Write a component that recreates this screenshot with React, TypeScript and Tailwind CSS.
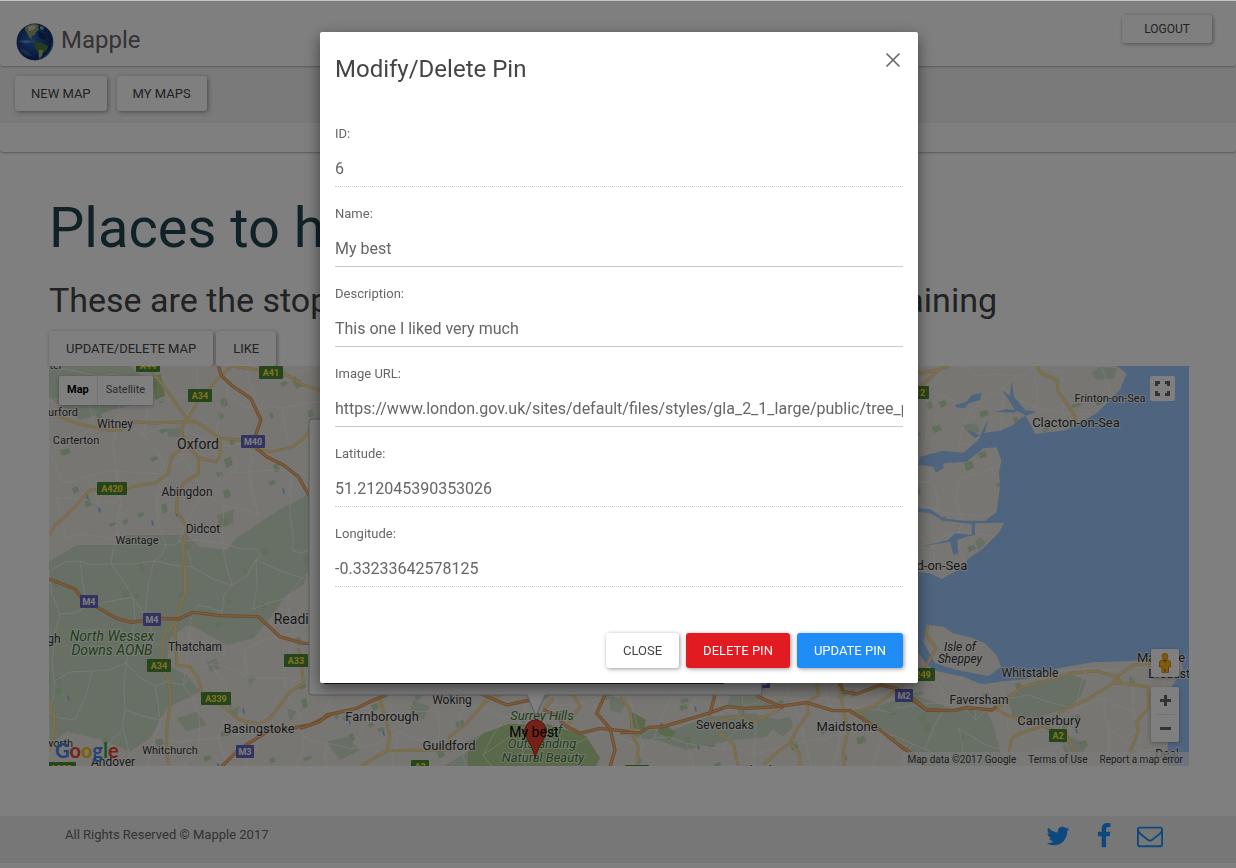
import React from "react";

const FONT = "font-['Roboto','Noto_Sans',sans-serif]";

/* ---------- Map data ---------- */

type Label = { x: number; y: number; text: string; size?: number; tone?: "park" | "isle" };

const LABELS: Label[] = [
  { x: 56, y: 369, text: "ter", size: 11 },
  { x: 63, y: 416, text: "urford", size: 11 },
  { x: 115, y: 428, text: "Witney", size: 12 },
  { x: 76, y: 444, text: "Carterton", size: 11 },
  { x: 198, y: 449, text: "Oxford", size: 14 },
  { x: 187, y: 496, text: "Abingdon", size: 12 },
  { x: 203, y: 533, text: "Didcot", size: 12 },
  { x: 137, y: 544, text: "Wantage", size: 11 },
  { x: 299, y: 624, text: "Reading", size: 14 },
  { x: 112, y: 641, text: "North Wessex", size: 14, tone: "park" },
  { x: 112, y: 655, text: "Downs AONB", size: 14, tone: "park" },
  { x: 54, y: 643, text: "gh", size: 12 },
  { x: 195, y: 651, text: "Thatcham", size: 12 },
  { x: 259, y: 733, text: "Basingstoke", size: 13 },
  { x: 170, y: 754, text: "Whitchurch", size: 11 },
  { x: 113, y: 766, text: "Andover", size: 12 },
  { x: 59, y: 747, text: "worth", size: 11 },
  { x: 452, y: 704, text: "Woking", size: 12 },
  { x: 382, y: 721, text: "Farnborough", size: 13 },
  { x: 449, y: 750, text: "Guildford", size: 13 },
  { x: 542, y: 720, text: "Surrey Hills", size: 13, tone: "park" },
  { x: 542, y: 734, text: "Area of", size: 13, tone: "park" },
  { x: 542, y: 748, text: "Outstanding", size: 13, tone: "park" },
  { x: 543, y: 762, text: "Natural Beauty", size: 13, tone: "park" },
  { x: 725, y: 729, text: "Sevenoaks", size: 12 },
  { x: 847, y: 731, text: "Maidstone", size: 13 },
  { x: 757, y: 775, text: "Tunbridge", size: 13 },
  { x: 1110, y: 402, text: "Frinton-on-Sea", size: 11 },
  { x: 1076, y: 427, text: "Clacton-on-Sea", size: 13 },
  { x: 918, y: 570, text: "Southend-on-Sea", size: 13 },
  { x: 960, y: 651, text: "Isle of", size: 12, tone: "isle" },
  { x: 960, y: 663, text: "Sheppey", size: 12, tone: "isle" },
  { x: 1030, y: 677, text: "Whitstable", size: 12 },
  { x: 979, y: 704, text: "Faversham", size: 12 },
  { x: 1049, y: 725, text: "Canterbury", size: 13 },
  { x: 1161, y: 662, text: "Margate", size: 13 },
  { x: 1179, y: 678, text: "Broadstairs", size: 12 },
  { x: 1167, y: 758, text: "Deal", size: 12 },
];

const BADGES: { x: number; y: number; text: string; motorway?: boolean }[] = [
  { x: 148, y: 365, text: "A44" },
  { x: 271, y: 372, text: "A41" },
  { x: 200, y: 395, text: "A34" },
  { x: 112, y: 488, text: "A420" },
  { x: 253, y: 441, text: "M40", motorway: true },
  { x: 89, y: 601, text: "M4", motorway: true },
  { x: 152, y: 619, text: "M4", motorway: true },
  { x: 159, y: 665, text: "A34" },
  { x: 216, y: 698, text: "A339" },
  { x: 296, y: 660, text: "A33" },
  { x: 245, y: 751, text: "M3", motorway: true },
  { x: 61, y: 768, text: "A303" },
  { x: 420, y: 766, text: "A3" },
  { x: 637, y: 771, text: "A22" },
  { x: 758, y: 681, text: "M25", motorway: true },
  { x: 917, y: 392, text: "A12" },
  { x: 920, y: 674, text: "A249" },
  { x: 904, y: 695, text: "M2", motorway: true },
  { x: 1058, y: 735, text: "A2" },
];

/* Each tile holds shapes drawn at three units per map pixel from its own origin. */
type Tile = {
  origin: [number, number];
  parks?: string[];
  sea?: string[];
  islands?: string[];
  roads?: string[];
  motorways?: string[];
};

const TILES: Tile[] = [
  {
    origin: [40, 360],
    parks: [
      "M27 605L110 555 230 555 260 525 440 525 480 560 560 570 590 535 640 500 700 460 810 400 810 640 27 640Z",
      "M27 18L270 18 300 45 340 50 340 120 220 150 120 180 27 110Z",
      "M530 465L580 450 580 490 545 500Z",
      "M380 205L425 200 420 230 385 230Z",
    ],
    roads: [
      "M27 525L45 495 75 470 110 435 150 390 255 388 300 375 345 370 385 340 395 290 425 265",
      "M27 155L60 170 110 190 200 210 240 210 280 185 340 190 420 185 470 185 540 235 600 240 650 270 700 275 760 260 790 235 810 210",
      "M335 35L380 90 440 175 425 205 430 240 475 295 475 340 430 370 410 420 410 455 440 500 430 560 432 640",
      "M440 185L470 130 530 60 575 18",
      "M575 18L690 35 740 45 790 75 840 90",
      "M475 295L530 305 540 285 540 235",
    ],
    motorways: ["M535 18L545 48 580 80 632 115 663 180 645 230 650 265 680 290 730 315 775 350 808 408"],
  },
  {
    origin: [40, 565],
    parks: [
      "M27 0L810 0 790 60 740 90 690 160 640 220 560 240 470 190 440 180 390 220 380 300 440 330 480 380 380 430 330 520 270 560 190 525 80 500 27 540Z",
      "M500 290L530 280 540 310 510 320Z M620 330L650 340 630 360Z M740 430L770 440 750 470Z",
      "M410 460L470 440 500 480 440 500Z M560 440L600 420 590 460Z",
    ],
    roads: [
      "M435 0L435 80 410 165 370 215 365 300 385 350 392 400 380 500 380 560 385 600",
      "M405 180L410 300 450 305 475 340 485 385 550 425 600 465 650 475",
      "M650 480L690 460 720 420 750 380 790 355 785 300 775 250",
      "M27 410L42 450 40 510 27 560",
    ],
    motorways: [
      "M27 42L105 72 125 100 230 160 275 172 360 160 415 162 460 142 540 152 655 155 720 215 790 235 812 235",
      "M545 605L600 550 650 520 690 495 750 490 810 480 870 450",
    ],
  },
  {
    origin: [300, 670],
    parks: [
      "M430 290L510 240 500 215 560 185 640 175 720 200 800 215 870 240 890 290Z",
      "M80 215L140 200 180 240 120 270Z M340 90L390 110 370 150 330 130Z",
      "M930 75L980 95 960 130 930 120Z",
    ],
    roads: [
      "M235 75L255 140 270 200 260 242 180 290",
      "M260 242L440 240 450 200 500 160 560 90 600 75",
      "M730 120L760 85M820 75L840 110 800 170",
    ],
    motorways: [
      "M0 175L60 155 80 135 170 115 210 95 260 75",
      "M540 70L620 105 690 90",
      "M730 120L765 135 800 170 840 190 900 175 990 185",
      "M915 75L890 130 930 175 945 240 930 290",
    ],
  },
  {
    origin: [620, 670],
    parks: [
      "M30 200L80 180 160 180 265 140 400 130 480 150 440 200 340 210 200 240 110 210Z",
      "M330 75L430 75 460 110 320 110Z M700 130L880 75 960 130 960 230 850 225 780 170Z",
      "M470 150L510 140 520 170 490 200 460 180Z",
    ],
    roads: [
      "M265 130L300 190 340 220 355 290",
      "M0 80L30 120 40 200 55 230 50 290",
      "M300 150L350 140 400 155 480 120",
      "M590 40L595 75 560 98 565 130 530 180 510 220 540 250 540 290",
      "M510 220L480 240 430 285",
      "M655 40L670 120 685 180 670 240 672 290",
      "M690 130L760 110 850 45",
    ],
    motorways: [
      "M0 188L60 188 85 172 130 170 265 130 320 110 380 115 470 110 560 98 640 122 690 122 780 180 850 235 890 262",
      "M270 130L285 75",
      "M410 78L460 100 490 115",
      "M660 40L670 65 710 72 780 45 830 55 870 85 920 120 965 122",
    ],
  },
  {
    origin: [900, 360],
    parks: ["M575 40L600 20 650 25 645 55 590 60Z", "M185 195L230 190 240 215 210 225Z", "M225 545L240 532 258 550 235 570Z"],
    sea: [
      "M650 18L680 40 660 90 630 120 590 160 500 210 405 222 398 205 375 165 345 150 320 110 305 90 330 108 335 60 342 110 375 150 410 155 385 165 365 172 340 195 300 212 245 220 235 240 190 278 130 272 60 290 55 315 100 320 108 338 130 325 130 310 200 305 250 265 290 262 304 300 297 340 300 380 290 455 255 482 190 482 130 475 90 447 40 445 40 455 90 460 130 482 215 492 215 525 165 520 145 540 60 560 150 545 160 585 175 580 172 540 200 530 225 525 225 490 313 488 295 520 250 565 200 600 200 640 867 640 867 18Z",
      "M165 135L200 125 215 105 245 98 240 120 205 130 195 145 168 142Z",
      "M285 155L320 148 360 150 340 158Z M200 210L240 225 265 178 255 215 225 235Z",
    ],
    roads: [
      "M55 40L100 32 150 18M60 80L100 45 130 18",
      "M410 18L425 40 470 60 475 95 500 130 520 160 530 185",
    ],
  },
  {
    origin: [900, 565],
    parks: [
      "M20 380L150 430 260 440 280 480 310 600 20 600Z",
      "M400 350L520 330 560 345 540 400 500 430 410 460 340 460 320 390Z",
      "M480 500L560 540 540 600 500 600Z",
    ],
    sea: [
      "M40 20L90 25 125 42 200 0 867 0 867 605 803 605 803 520 830 440 835 400 812 370 850 310 840 280 760 275 700 288 580 292 480 308 380 342 300 350 245 358 190 335 110 318 80 300 40 240Z",
    ],
    islands: ["M80 180L130 185 160 205 215 218 255 235 290 270 303 305 265 333 170 315 105 295 70 230Z"],
    roads: [
      "M85 180L78 210 108 248 85 290 60 330",
      "M285 435L365 365 420 355 510 325 590 318 650 335 700 300 800 290",
      "M430 480L500 430 560 405 640 355 650 335 665 355 745 365 745 430 710 470 715 500 690 560 690 600",
      "M285 430L320 450 420 480 500 510 540 600",
      "M320 600L335 520 360 505 425 485",
      "M640 355L665 355",
    ],
    motorways: ["M20 385L80 435 160 437 200 428 275 435 290 425", "M0 540L40 570 80 600"],
  },
];

/* Country lanes and woods are laid out on a jittered grid with a fixed seed. */
function buildCountryside() {
  let seed = 41;
  const rand = () => {
    seed = (seed * 16807) % 2147483647;
    return seed / 2147483647;
  };
  const step = 34;
  const cols = 36;
  const rows = 14;
  const points: [number, number][][] = [];
  for (let r = 0; r < rows; r++) {
    const row: [number, number][] = [];
    for (let c = 0; c < cols; c++) {
      row.push([Math.round(40 + c * step + rand() * 26), Math.round(355 + r * step + rand() * 26)]);
    }
    points.push(row);
  }
  let lanes = "";
  const link = (a: [number, number], b: [number, number]) => {
    const mx = Math.round((a[0] + b[0]) / 2 + rand() * 8 - 4);
    const my = Math.round((a[1] + b[1]) / 2 + rand() * 8 - 4);
    lanes += `M${a[0]} ${a[1]}L${mx} ${my} ${b[0]} ${b[1]}`;
  };
  for (let r = 0; r < rows; r++) {
    for (let c = 0; c < cols; c++) {
      if (c + 1 < cols && rand() > 0.25) link(points[r][c], points[r][c + 1]);
      if (r + 1 < rows && rand() > 0.25) link(points[r][c], points[r + 1][c]);
    }
  }
  let woods = "";
  let ponds = "";
  for (let i = 0; i < 260; i++) {
    const x = Math.round(49 + rand() * 1130);
    const y = Math.round(366 + rand() * 400);
    const w = Math.round(3 + rand() * 6);
    const h = Math.round(2 + rand() * 6);
    woods += `M${x} ${y}l${w} -2 2 ${h} -${w} 3z`;
    if (i % 9 === 0) ponds += `M${x + 14} ${y + 6}l2 1 1 5 -2 -1z`;
  }
  return { lanes, woods, ponds };
}

const COUNTRYSIDE = buildCountryside();

function TileLayer({ pick, render }: { pick: (t: Tile) => string[] | undefined; render: (d: string) => React.ReactNode }) {
  return (
    <>
      {TILES.map((tile, i) => (
        <g key={i} transform={`translate(${tile.origin[0]} ${tile.origin[1]}) scale(0.33333)`}>
          {(pick(tile) || []).map((d, j) => (
            <React.Fragment key={j}>{render(d)}</React.Fragment>
          ))}
        </g>
      ))}
    </>
  );
}

function MapDrawing() {
  const tone = { park: "#3f7d2c", isle: "#333333" };
  return (
    <svg
      viewBox="49 366 1140 400"
      preserveAspectRatio="xMidYMid slice"
      className="block h-[400px] w-full"
      role="img"
      aria-label="Map of south-east England"
    >
      <rect x="49" y="366" width="1140" height="400" fill="#f0ece5" />
      <TileLayer pick={(t) => t.parks} render={(d) => <path d={d} fill="#d0e0cb" />} />
      <path d={COUNTRYSIDE.woods} fill="#c3dcb9" />
      <path
        d="M153 376l8 -2 4 22 -10 4zM468 752l14 -18 26 -10 40 0 38 12 14 22 -4 8 -128 0zM632 712l14 8 -2 10 -14 -2zM660 722l16 10 -6 8 -12 -8z"
        fill="#b3d394"
      />
      <path d={COUNTRYSIDE.ponds} fill="#8fbcf5" />
      <path d={COUNTRYSIDE.lanes} fill="none" stroke="#ffffff" strokeOpacity="0.6" strokeWidth="1" />
      <TileLayer pick={(t) => t.sea} render={(d) => <path d={d} fill="#9fc9ff" />} />
      <TileLayer pick={(t) => t.islands} render={(d) => <path d={d} fill="#f0ece5" />} />
      <TileLayer
        pick={(t) => t.roads}
        render={(d) => (
          <>
            <path d={d} fill="none" stroke="#e3cd92" strokeWidth="9" strokeLinejoin="round" />
            <path d={d} fill="none" stroke="#fbe0a0" strokeWidth="6" strokeLinejoin="round" />
          </>
        )}
      />
      <TileLayer
        pick={(t) => t.motorways}
        render={(d) => (
          <>
            <path d={d} fill="none" stroke="#d99556" strokeWidth="10" strokeLinejoin="round" />
            <path d={d} fill="none" stroke="#f6b77c" strokeWidth="5" strokeLinejoin="round" />
          </>
        )}
      />
      {LABELS.map((l) => (
        <text
          key={`${l.text}-${l.x}`}
          x={l.x}
          y={l.y}
          textAnchor="middle"
          fontSize={l.size}
          fontStyle={l.tone ? "italic" : "normal"}
          fill={l.tone ? tone[l.tone] : "#333333"}
          stroke="#ffffff"
          strokeOpacity="0.7"
          strokeWidth="2"
          strokeLinejoin="round"
          paintOrder="stroke"
        >
          {l.text}
        </text>
      ))}
      {BADGES.map((b) => {
        const w = b.text.length * 6 + 6;
        return (
          <g key={`${b.text}-${b.x}`}>
            <rect x={b.x - w / 2} y={b.y - 6} width={w} height="13" rx="1" fill={b.motorway ? "#6667c4" : "#4f8a35"} />
            <text
              x={b.x}
              y={b.y + 4}
              textAnchor="middle"
              fontSize="9"
              fontWeight="700"
              fill={b.motorway ? "#ffffff" : "#ffe94a"}
            >
              {b.text}
            </text>
          </g>
        );
      })}
      {/* Info window */}
      <path
        d="M312 419H759a3 3 0 0 1 3 3V692a3 3 0 0 1 -3 3H545L536 716 527 695H312a3 3 0 0 1 -3 -3V422a3 3 0 0 1 3 -3Z"
        fill="#ffffff"
        stroke="#b5b5b5"
        strokeWidth="1"
      />
      <rect x="324" y="484" width="400" height="200" fill="#34401f" />
      {/* Pin */}
      <path
        d="M535 759C534 746 525 740 525 730.500a10.500 10.500 0 0 1 21 0C546 740 537 746 535 759Z"
        fill="#ea4335"
        stroke="#a52714"
        strokeWidth="1"
      />
      <text x="534" y="737" textAnchor="middle" fontSize="14" fill="#000000">
        My best
      </text>
    </svg>
  );
}

function GoogleMark() {
  return (
    <a
      href="#google"
      aria-label="Google"
      className="absolute bottom-0.5 left-1.5 font-['Lato',sans-serif] text-xl leading-7 font-bold"
    >
      <span className="text-[#4285f4]">G</span>
      <span className="text-[#ea4335]">o</span>
      <span className="text-[#fbbc05]">o</span>
      <span className="text-[#4285f4]">g</span>
      <span className="text-[#34a853]">l</span>
      <span className="text-[#ea4335]">e</span>
    </a>
  );
}

function MapPanel() {
  return (
    <section className="relative overflow-hidden" aria-label="Map">
      <MapDrawing />
      <div className="absolute top-2.5 left-2.5 flex h-[29px] rounded-xs bg-white text-[11px] shadow-[0_1px_4px_rgba(0,0,0,0.3)]">
        <button type="button" className="border-r border-gray-200 px-2 font-bold text-black">
          Map
        </button>
        <button type="button" className="px-2 text-[#565656]">
          Satellite
        </button>
      </div>
      <button
        type="button"
        aria-label="Toggle fullscreen"
        className="absolute top-2.5 right-3.5 flex size-[25px] items-center justify-center rounded-xs bg-white"
      >
        <svg viewBox="0 0 15 15" className="size-[15px]" fill="none" stroke="#666666" strokeWidth="3">
          <path d="M1.500 5V1.500H5M10 1.500h3.500V5M13.500 10v3.500H10M5 13.500H1.500V10" />
        </svg>
      </button>
      <div className="absolute right-2.5 bottom-6 flex flex-col gap-2.5">
        <button
          type="button"
          aria-label="Street View"
          className="flex h-7 w-7 items-center justify-center rounded-xs bg-white shadow-[0_1px_4px_rgba(0,0,0,0.3)]"
        >
          <svg viewBox="0 0 12 20" className="h-5 w-3">
            <circle cx="6" cy="3.500" r="3" fill="#fbb917" stroke="#c97a0a" strokeWidth="0.8" />
            <path
              d="M3 7H9L11.500 8.500V14H9.500V19.500H6.500V16H5.500V19.500H3V14H0.500V8.500Z"
              fill="#fbb917"
              stroke="#c97a0a"
              strokeWidth="0.8"
            />
            <path d="M4 7h4l-2 3z" fill="#d9541e" />
          </svg>
        </button>
        <div className="flex w-7 flex-col items-center rounded-xs bg-white shadow-[0_1px_4px_rgba(0,0,0,0.3)]">
          <button type="button" aria-label="Zoom in" className="flex h-[27px] w-full items-center justify-center">
            <svg viewBox="0 0 11 11" className="size-[11px]" stroke="#666666" strokeWidth="3">
              <path d="M0 5.500H11M5.500 0V11" />
            </svg>
          </button>
          <div className="h-px w-5 bg-gray-200" />
          <button type="button" aria-label="Zoom out" className="flex h-[27px] w-full items-center justify-center">
            <svg viewBox="0 0 11 11" className="size-[11px]" stroke="#666666" strokeWidth="3">
              <path d="M0 5.500H11" />
            </svg>
          </button>
        </div>
      </div>
      <GoogleMark />
      <div className="absolute right-0 bottom-0 flex h-3.5 items-center gap-3 bg-[#f5f5f5]/70 pr-1.5 pl-1 text-[10px] text-[#444444]">
        <span>Map data ©2017 Google</span>
        <a href="#terms">Terms of Use</a>
        <a href="#report">Report a map error</a>
      </div>
    </section>
  );
}

/* ---------- Shared pieces ---------- */

function Button({
  children,
  tone = "default",
  size = "regular",
}: {
  children: React.ReactNode;
  tone?: "default" | "danger" | "primary";
  size?: "regular" | "nav" | "small";
}) {
  const tones = {
    default: "bg-white text-[#444444]",
    danger: "bg-[#e21b22] text-white",
    primary: "bg-[#1f8df5] text-white",
  };
  const sizes = {
    regular: "h-[35px] px-[17px] text-[13px]",
    nav: "h-[35px] px-4 text-[13px]",
    small: "h-7 px-[22px] text-xs",
  };
  return (
    <button
      type="button"
      className={`rounded-[3px] whitespace-nowrap uppercase shadow-[1px_1px_4px_rgba(0,0,0,0.4)] ${sizes[size]} ${tones[tone]}`}
    >
      {children}
    </button>
  );
}

function Globe() {
  return (
    <svg viewBox="0 0 38 38" className="size-[38px]" aria-hidden="true">
      <defs>
        <radialGradient id="ocean" cx="0.42" cy="0.45" r="0.6">
          <stop offset="0" stopColor="#2f68b8" />
          <stop offset="0.5" stopColor="#1b4690" />
          <stop offset="0.88" stopColor="#102a66" />
          <stop offset="1" stopColor="#5a93cf" />
        </radialGradient>
      </defs>
      <circle cx="19" cy="19" r="18.500" fill="url(#ocean)" />
      <path d="M9 4.500C12 2.500 15 1 19 1l4 1-1 3 1 2-3 2-1 3-3 1-1 3-2-2-2-4-2-3Z" fill="#8fa070" />
      <path d="M12 4l5-2 3 2-3 3-4 1Z" fill="#c9cfae" />
      <path d="M24 3l4 1-1 3-3-1Z" fill="#9db08a" />
      <path d="M14 15l3 2 3 2-1 1-4-2Z" fill="#5f8050" />
      <path d="M19 21l4-2 5 2 4 2-1 4-4 3-2 5-2 1-1-7-3-4Z" fill="#4f7a34" />
      <path d="M23 27l4 0-1 6-3 2Z" fill="#a4ae8a" />
      <path d="M22 8l8 4-1 5-4-1-3-3Z" fill="#0c1f4d" opacity="0.6" />
      <path d="M2 18l9-1 6 2-8 1.500Z" fill="#c5daf5" opacity="0.4" />
      <path d="M4 25l7 3 5 5-6-1-5-4Z" fill="#4c8bd8" opacity="0.4" />
    </svg>
  );
}

function SiteHeader() {
  return (
    <header>
      <div className="relative z-10 flex h-[65px] items-start justify-between rounded-b-[3px] bg-white pt-3.5 pr-6 pl-4 shadow-[0_1px_2px_rgba(0,0,0,0.3)]">
        <a href="#home" className="flex items-start gap-[7px] pt-2 text-2xl leading-[34px] text-[#666666]">
          <Globe />
          <span>Mapple</span>
        </a>
        <Button size="small">Logout</Button>
      </div>
      <div className="rounded-b-[3px] bg-white pt-px pb-[29px] shadow-[0_1px_2px_rgba(0,0,0,0.3)]">
        <nav className="flex gap-2.5 bg-[#f4f4f4] px-[15px] pt-[9px] pb-3">
          <Button size="nav">New map</Button>
          <Button size="nav">My maps</Button>
        </nav>
      </div>
    </header>
  );
}

function SocialIcon({ label, href, d }: { label: string; href: string; d: string }) {
  return (
    <a href={href} aria-label={label}>
      <svg viewBox="0 0 1792 1792" className="size-[26px]" fill="currentColor">
        <path d={d} />
      </svg>
    </a>
  );
}

function SiteFooter() {
  return (
    <footer className="mt-[50px] bg-[#eeeeee]">
      <div className="flex h-[47px] items-start justify-between pt-[7px] pr-[73px] pl-[65px]">
        <p className="text-[13px] leading-6 text-[#666666]">All Rights Reserved © Mapple 2017</p>
        <div className="flex gap-5 text-[#1e90f8]">
          <SocialIcon
            label="Twitter"
            href="#twitter"
            d="M1684 408q-67 98-162 167 1 14 1 42 0 130-38 259.500t-115.500 248.500-184.500 210.500-258 146-323 54.500q-271 0-496-145 35 4 78 4 225 0 401-138-105-2-188-64.500t-114-159.500q33 5 61 5 43 0 85-11-112-23-185.500-111.500t-73.500-205.500v-4q68 38 146 41-66-44-105-115t-39-154q0-88 44-163 121 149 294.500 238.500t371.500 99.500q-8-38-8-74 0-134 94.500-228.500t228.500-94.500q140 0 236 102 109-21 205-78-37 115-142 178 93-10 186-50z"
          />
          <SocialIcon
            label="Facebook"
            href="#facebook"
            d="M1343 12v264h-157q-86 0-116 36t-30 108v189h293l-39 296h-254v759h-306v-759h-255v-296h255v-218q0-186 104-288.500t277-102.500q147 0 228 12z"
          />
          <SocialIcon
            label="Email"
            href="#email"
            d="M1664 1504v-768q-32 36-69 66-268 206-426 338-51 43-83 67t-86.500 48.500-102.500 24.500h-2q-48 0-102.500-24.500t-86.500-48.500-83-67q-158-132-426-338-37-30-69-66v768q0 13 9.500 22.500t22.500 9.500h1472q13 0 22.500-9.500t9.500-22.500zm0-1051v-24.500t-.5-13-3-12.500-5.500-9-9-7.500-14-2.500h-1472q-13 0-22.500 9.500t-9.500 22.500q0 168 147 284 193 152 401 317 6 5 35 29.500t46 37.500 44.500 31.500 50.500 27.500 43 9h2q20 0 43-9t50.500-27.500 44.500-31.500 46-37.500 35-29.500q208-165 401-317 54-43 100.500-115.500t46.500-131.500zm128-37v1088q0 66-47 113t-113 47h-1472q-66 0-113-47t-47-113v-1088q0-66 47-113t113-47h1472q66 0 113 47t47 113z"
          />
        </div>
      </div>
    </footer>
  );
}

/* ---------- Dialog ---------- */

const FIELDS = [
  { id: "pin-id", label: "ID:", value: "6", disabled: true },
  { id: "pin-name", label: "Name:", value: "My best", disabled: false },
  { id: "pin-description", label: "Description:", value: "This one I liked very much", disabled: false },
  {
    id: "pin-image",
    label: "Image URL:",
    value: "https://www.london.gov.uk/sites/default/files/styles/gla_2_1_large/public/tree_planting.jpg",
    disabled: false,
  },
  { id: "pin-lat", label: "Latitude:", value: "51.212045390353026", disabled: true },
  { id: "pin-lng", label: "Longitude:", value: "-0.33233642578125", disabled: true },
];

function PinDialog() {
  return (
    <div className="fixed inset-x-0 top-px bottom-0 z-20 flex items-start justify-center overflow-hidden bg-black/50 pt-[31px] pl-0.5">
      <div
        role="dialog"
        aria-modal="true"
        aria-labelledby="dialog-title"
        className="w-full max-w-[598px] rounded-xs bg-white px-[15px] pb-[15px] shadow-[0_5px_15px_rgba(0,0,0,0.5)]"
      >
        <div className="flex items-start justify-between pt-5 pb-10">
          <h4 id="dialog-title" className="pt-1 text-2xl leading-[26px] text-[#444444]">
            Modify/Delete Pin
          </h4>
          <button type="button" aria-label="Close dialog" className="flex h-4 w-5 items-center justify-center">
            <svg viewBox="0 0 16 16" className="size-4" fill="none" stroke="#666666" strokeWidth="1.600">
              <path d="M1.500 1.500L14.500 14.500M14.500 1.500L1.500 14.500" />
            </svg>
          </button>
        </div>
        <form className="flex flex-col gap-[15px]">
          {FIELDS.map((f) => (
            <div key={f.id} className="flex flex-col gap-1">
              <label htmlFor={f.id} className="text-[13px] leading-6 text-[#666666]">
                {f.label}
              </label>
              <input
                id={f.id}
                type="text"
                defaultValue={f.value}
                disabled={f.disabled}
                className="h-[37px] w-full border-b border-[#cccccc] bg-transparent text-base text-[#666666] outline-none disabled:border-dotted"
              />
            </div>
          ))}
        </form>
        <div className="flex justify-end gap-[7px] pt-[46px]">
          <Button>Close</Button>
          <Button tone="danger">Delete pin</Button>
          <Button tone="primary">Update pin</Button>
        </div>
      </div>
    </div>
  );
}

export default function App() {
  return (
    <div className={`min-h-screen bg-white ${FONT}`}>
      <div className="h-px bg-[#c8cbca]" />
      <SiteHeader />
      <main className="overflow-hidden pt-[45px] pr-[47px] pl-[49px]">
        <h1 className="text-[56px] leading-[62px] text-[#20444f]">Places to hike</h1>
        <h3 className="pt-[23px] pb-3 text-[34px] leading-[37px] whitespace-nowrap text-[#444444]">
          These are the stops we want to make for our marathon training
        </h3>
        <div className="flex gap-[3px]">
          <Button>Update/Delete map</Button>
          <Button>Like</Button>
        </div>
        <MapPanel />
      </main>
      <SiteFooter />
      <PinDialog />
    </div>
  );
}
